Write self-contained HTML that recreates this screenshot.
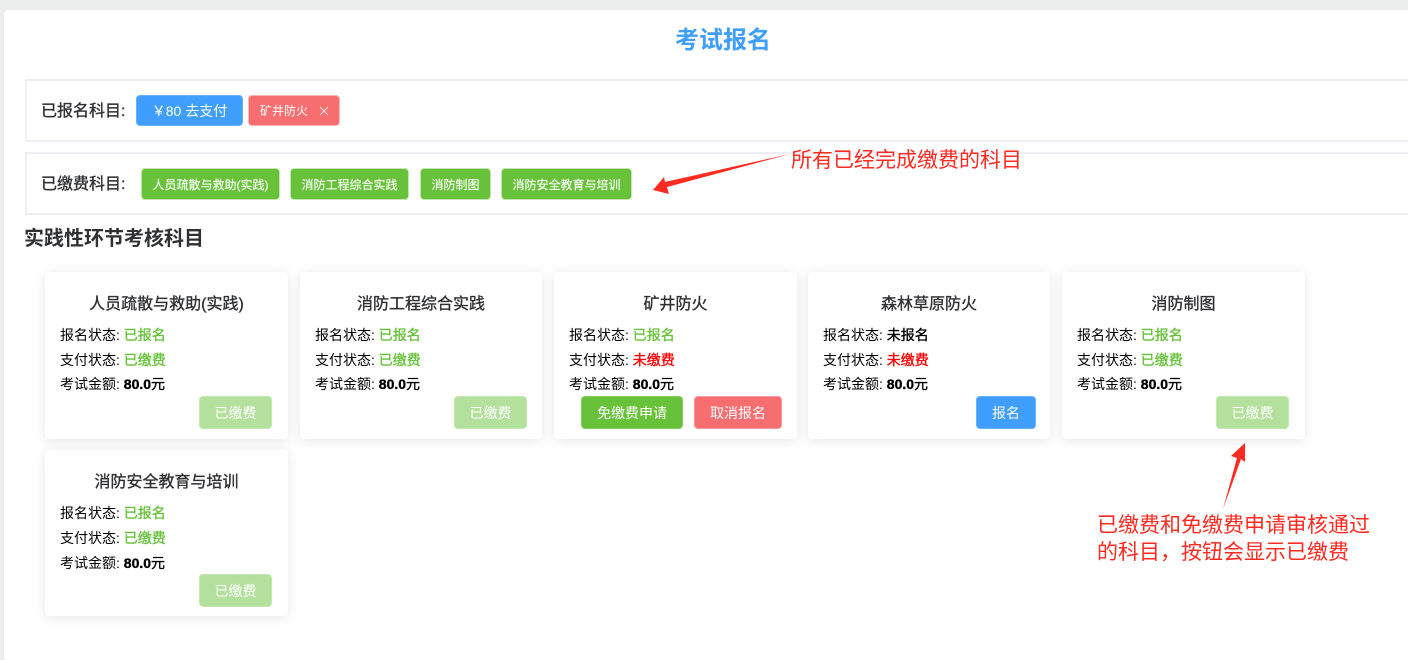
<!DOCTYPE html>
<html lang="zh">
<head>
<meta charset="utf-8">
<style>
html,body{margin:0;padding:0;width:1408px;height:654px;overflow:hidden;background:#ebeeed;font-family:"Liberation Sans","Noto Sans CJK SC",sans-serif;}
.abs,.panel,.box,.btn,.card,.t{position:absolute;box-sizing:border-box;}
.panel{left:4px;top:10px;width:1410px;height:650px;background:#fff;border-radius:4px;}
.box{left:25px;width:1400px;height:63px;border:2px solid #eeeef4;background:#fff;}
.t{white-space:nowrap;line-height:20px;}
.lbl{font-size:16px;color:#303133;-webkit-text-stroke:.35px #303133;}
.btn{border-radius:4px;color:#fff;text-align:center;white-space:nowrap;font-size:14px;}
.tag{font-size:12px;background:#67c23a;border:1px solid #c2e7b0;top:168px;height:32px;line-height:32px;color:#fbfff8;-webkit-text-stroke:.15px #fff;}
.card{background:#fff;border-radius:4px;box-shadow:0 2px 12px rgba(0,0,0,.1);width:243px;height:167px;}
.card h4{position:absolute;left:0;right:0;top:22px;margin:0;text-align:center;font-size:16px;font-weight:400;color:#303133;line-height:22px;-webkit-text-stroke:.35px #303133;}
.row{position:absolute;left:15px;font-size:14px;color:#000;line-height:18px;white-space:nowrap;word-spacing:0;}
.g{color:#67c23a;-webkit-text-stroke:.35px #67c23a;}.r{color:#f00;-webkit-text-stroke:.35px #f00;}.k{color:#000;-webkit-text-stroke:.35px #000;}
.m{font-weight:700;-webkit-text-stroke:0;}
.cbtn{top:124px;height:33px;line-height:32px;}
.off{left:154px;width:73px;background:#b3e19d;border:1px solid #c2e7b0;}
.red{color:#ff2a20;font-size:21px;line-height:29px;white-space:nowrap;}
</style>
</head>
<body>
<div class="panel"></div>
<div class="t" style="left:0;width:1446px;top:25px;line-height:32px;text-align:center;font-size:24px;font-weight:700;color:#409eff;">考试报名</div>

<div class="box" style="top:79px;"></div>
<div class="t lbl" style="left:41px;top:102px;">已报名科目:</div>
<div class="btn" style="left:136px;top:95px;width:107px;height:31px;line-height:30px;background:#409eff;border:1px solid #66b1ff;font-size:14px;">￥80 去支付</div>
<div class="btn" style="left:248px;top:95px;width:92px;height:31px;line-height:30px;background:#f76e70;border:1px solid #fab6b6;font-size:12px;text-align:left;padding-left:11px;">矿井防火<svg style="position:absolute;left:70px;top:10px" width="10" height="10" viewBox="0 0 10 10"><path d="M1 1L9 9M9 1L1 9" stroke="#fde2e2" stroke-width="1" fill="none"/></svg></div>

<div class="box" style="top:152px;"></div>
<div class="t lbl" style="left:41px;top:175px;">已缴费科目:</div>
<div class="btn tag" style="left:141px;width:139px;">人员疏散与救助(实践)</div>
<div class="btn tag" style="left:290px;width:119px;">消防工程综合实践</div>
<div class="btn tag" style="left:420px;width:71px;">消防制图</div>
<div class="btn tag" style="left:501px;width:131px;">消防安全教育与培训</div>

<div class="t" style="left:24px;top:227px;line-height:24px;font-size:20px;font-weight:700;color:#303133;">实践性环节考核科目</div>

<div class="card" style="left:45px;top:272px;">
<h4>人员疏散与救助(实践)</h4>
<div class="row" style="top:54px;">报名状态: <span class="g">已报名</span></div>
<div class="row" style="top:79px;">支付状态: <span class="g">已缴费</span></div>
<div class="row" style="top:103px;">考试金额: <span class="k"><b>80.0</b>元</span></div>
<div class="btn cbtn off">已缴费</div>
</div>

<div class="card" style="left:300px;top:272px;width:242px;">
<h4>消防工程综合实践</h4>
<div class="row" style="top:54px;">报名状态: <span class="g">已报名</span></div>
<div class="row" style="top:79px;">支付状态: <span class="g">已缴费</span></div>
<div class="row" style="top:103px;">考试金额: <span class="k"><b>80.0</b>元</span></div>
<div class="btn cbtn off">已缴费</div>
</div>

<div class="card" style="left:554px;top:272px;">
<h4>矿井防火</h4>
<div class="row" style="top:54px;">报名状态: <span class="g">已报名</span></div>
<div class="row" style="top:79px;">支付状态: <span class="r">未缴费</span></div>
<div class="row" style="top:103px;">考试金额: <span class="k"><b>80.0</b>元</span></div>
<div class="btn cbtn" style="left:27px;width:102px;background:#67c23a;border:1px solid #85ce61;">免缴费申请</div>
<div class="btn cbtn" style="left:140px;width:88px;background:#f76e70;border:1px solid #f89898;">取消报名</div>
</div>

<div class="card" style="left:808px;top:272px;width:242px;">
<h4>森林草原防火</h4>
<div class="row" style="top:54px;">报名状态: <span class="k">未报名</span></div>
<div class="row" style="top:79px;">支付状态: <span class="r">未缴费</span></div>
<div class="row" style="top:103px;">考试金额: <span class="k"><b>80.0</b>元</span></div>
<div class="btn cbtn" style="left:168px;width:60px;background:#409eff;border:1px solid #66b1ff;">报名</div>
</div>

<div class="card" style="left:1062px;top:272px;">
<h4>消防制图</h4>
<div class="row" style="top:54px;">报名状态: <span class="g">已报名</span></div>
<div class="row" style="top:79px;">支付状态: <span class="g">已缴费</span></div>
<div class="row" style="top:103px;">考试金额: <span class="k"><b>80.0</b>元</span></div>
<div class="btn cbtn off">已缴费</div>
</div>

<div class="card" style="left:45px;top:450px;height:166px;">
<h4>消防安全教育与培训</h4>
<div class="row" style="top:54px;">报名状态: <span class="g">已报名</span></div>
<div class="row" style="top:79px;">支付状态: <span class="g">已缴费</span></div>
<div class="row" style="top:104px;">考试金额: <span class="k"><b>80.0</b>元</span></div>
<div class="btn cbtn off">已缴费</div>
</div>

<svg class="abs" style="left:0;top:0;" width="1408" height="654" viewBox="0 0 1408 654">
<path d="M790 154L667 187L669 194L653 190L664 177L665 182Z" fill="#ff2a20"/>
<path d="M1223 509L1237 458L1231 456L1245 443L1245 462L1241 459Z" fill="#ff2a20"/>
</svg>
<div class="t red" style="left:791px;top:146px;">所有已经完成缴费的科目</div>
<div class="t red" style="left:1097px;top:511px;">已缴费和免缴费申请审核通过</div>
<div class="t red" style="left:1097px;top:538px;">的科目，按钮会显示已缴费</div>
</body>
</html>
